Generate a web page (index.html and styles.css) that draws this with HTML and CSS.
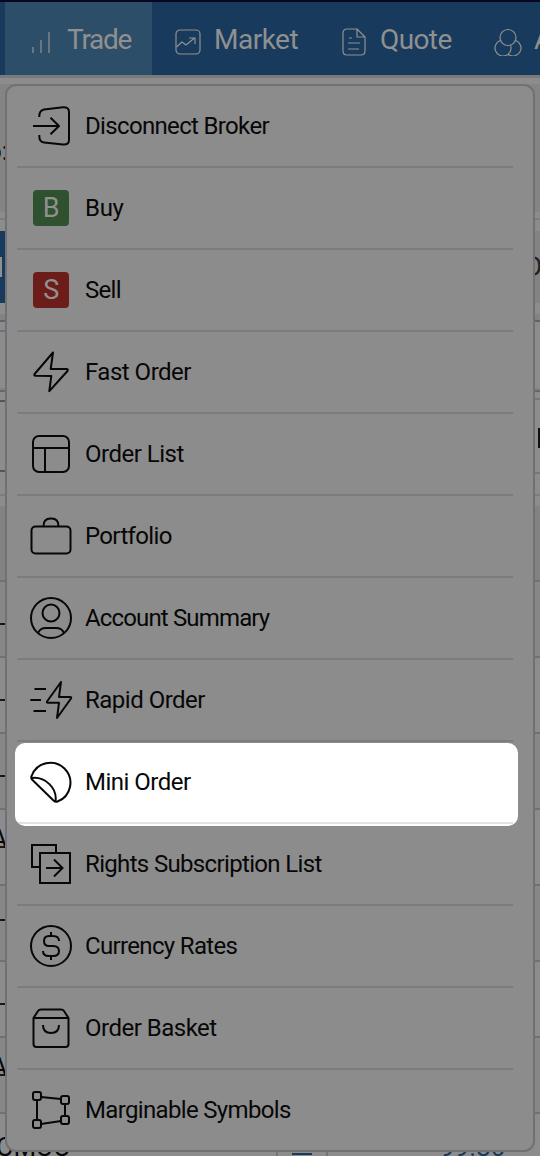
FILE: index.html
```html
<!DOCTYPE html>
<html lang="en">
<head>
<meta charset="utf-8">
<title>Trade menu</title>
<link rel="stylesheet" href="styles.css">
</head>
<body>
<header class="nav">
  <div class="tab active"><svg width="22" height="26" viewBox="0 0 22 26"><path d="M2 24v-6M10 24V11M18 24V3"/></svg><span class="l1">Trade</span></div>
  <div class="tab market"><svg width="26" height="26" viewBox="0 0 26 26"><rect x="1" y="1" width="24" height="24" rx="4"/><path d="M1.500 18l5.500-5 4 3 8.500-7M14 9h6v6"/></svg><span class="l2">Market</span></div>
  <div class="tab quote"><svg width="24" height="28" viewBox="0 0 24 28"><path d="M15 1H5Q1 1 1 5v18q0 4 4 4h14q4 0 4-4V9L15 1v8h8M7 10h3M6 15h12M6 21h11"/></svg><span class="l3">Quote</span></div>
  <div class="tab analysis"><svg width="28" height="28" viewBox="0 0 28 28"><circle cx="14" cy="9.500" r="8"/><path d="M6.200 12.500A8 8 0 1 0 16.600 17.400M21.800 12.500A8 8 0 1 1 14.200 26.400"/></svg><span>Analysis</span></div>
</header>
<main class="page">
  <div class="strip"></div>
  <section class="band"><span class="clip">o:</span></section>
  <section class="actions"><div class="blue"><i></i></div><div class="gray"><span>D</span></div></section>
  <section class="fields"><i></i></section>
  <section class="search"><div class="box"></div><div class="box side"><i></i></div></section>
  <section class="thead"></section>
  <section class="rows">
    <div class="row"><i></i></div><div class="row"><i></i></div><div class="row"><i></i></div>
    <div class="row"><b>A</b></div><div class="row high"><i></i></div><div class="row"><i></i></div><div class="row"><b>A</b></div>
    <div class="last"><span class="sym">OMOO</span><span class="cell"></span><span class="price">99.80</span></div>
  </section>
</main>
<nav class="menu">
  <div class="item"><svg viewBox="0 0 44 44"><path d="M10.300 13Q10 6.500 15 5.500L34 3.300Q40 3 40 8v28q0 5-6 4.500L15 38.500Q10 38 10.300 31M4 22h26M21.500 13.700l8.500 8.300-8.500 8.300"/></svg><span class="wide">Disconnect Broker</span></div>
  <div class="item"><div class="badge buy">B</div><span class="short">Buy</span></div>
  <div class="item"><div class="badge sell">S</div><span class="sellword">Sell</span></div>
  <div class="item"><svg viewBox="0 0 44 44"><path d="M24 2.500L5.600 24q-1 1.700 1 1.800l15.700.200-2 15.200L38.500 21q1-2-1-2H21.700Z"/></svg><span>Fast Order</span></div>
  <div class="item"><svg viewBox="0 0 44 44"><rect x="4" y="4" width="36" height="36" rx="6"/><path d="M4 16h36M16 16v24"/></svg><span>Order List</span></div>
  <div class="item"><svg viewBox="0 0 44 44"><rect x="2.500" y="12.500" width="39" height="27" rx="4"/><path d="M14.500 12q0-7.500 7-7.500h1q7 0 7 7.500"/></svg><span class="wide">Portfolio</span></div>
  <div class="item"><svg viewBox="0 0 44 44"><circle cx="22" cy="22" r="20"/><circle cx="22" cy="17" r="8.500"/><path d="M9 37q2-5 8-5h10q6 0 8 5"/></svg><span class="widest">Account Summary</span></div>
  <div class="item"><svg viewBox="0 0 44 44"><path d="M32 4L18 23.500q-.500 1.300 1 1.300h11L28 40l14-19.500q.800-1.500-1-1.500H30ZM5.500 11H17M1.300 22H12M4.500 33H17"/></svg><span>Rapid Order</span></div>
  <div class="item spot"><svg viewBox="0 0 44 44"><path d="M2.600 16A20 20 0 1 1 28.500 41.500Q26.500 42.300 24.500 40.500L3.500 20Q1.500 18 2.600 16ZM3 18C16 16.500 28.500 28 26.500 41.500"/></svg><span>Mini Order</span></div>
  <div class="item"><svg viewBox="0 0 44 44" class="sharp"><path d="M11 25H3V3h24v8M11 11h30v30H11ZM17 26h16M25 17.500l8.500 8.500-8.500 8.500"/></svg><span class="wide">Rights Subscription List</span></div>
  <div class="item"><svg viewBox="0 0 44 44"><circle cx="22" cy="22" r="20"/><path d="M22 8v4M22 32v4M30 17q0-5-6-5h-4q-5 0-5 5t5 5h4q6 0 6 5t-6 5h-4q-6 0-6-5"/></svg><span class="wide">Currency Rates</span></div>
  <div class="item"><svg viewBox="0 0 44 44"><path d="M4.500 12v26q0 3 3 3h29q3 0 3-3V12L35 5q-1-1.500-3-1.500H12q-2 0-3 1.500ZH39.500M14 19q0 8 8 8t8-8"/></svg><span>Order Basket</span></div>
  <div class="item"><svg viewBox="0 0 44 44"><rect x="4" y="4" width="8" height="8" rx="2"/><rect x="32" y="8" width="8" height="8" rx="2"/><rect x="32" y="28" width="8" height="8" rx="2"/><rect x="4" y="32" width="8" height="8" rx="2"/><path d="M12 9l20 2M8 12v20M36 16v12M12 36l20-3"/></svg><span class="wide">Marginable Symbols</span></div>
</nav>
</body>
</html>
```
FILE: styles.css
```css
* { box-sizing: border-box; }
body { margin: 0; width: 540px; height: 1156px; overflow: hidden; position: relative; background: #8c8c8c; color: #070707; font-family: Roboto, sans-serif; }
svg { fill: none; stroke: currentColor; stroke-width: 2; stroke-linejoin: round; flex: none; }
.nav { height: 75px; border-top: 2px solid #09061f; background: #183a5d; display: flex; padding-left: 5px; color: #909090; font-size: 28px; white-space: nowrap; overflow: hidden; }
.nav svg { stroke-width: 1.2; }
.tab { display: flex; align-items: center; flex: none; padding-top: 6px; }
.tab span { line-height: 32px; margin-top: -4px; }
.active { width: 147px; background: #2d4e69; padding-left: 26px; gap: 14px; }
.market { width: 166px; padding-left: 23px; gap: 13px; }
.quote { width: 152px; padding-left: 24px; gap: 14px; }
.analysis { width: 70px; padding-left: 24px; gap: 12px; }
.l1 { letter-spacing: -1.3px; }
.l2 { letter-spacing: -0.5px; }
.l3 { letter-spacing: -0.6px; }
.strip { height: 9px; border-top: 3px solid #7a7a7c; }
.band { height: 128px; background: #848484; padding-top: 52px; overflow: hidden; }
.clip { display: block; font-size: 26px; line-height: 30px; margin-left: -13px; }
.actions { margin-top: 6px; border-top: 2px solid #7d7d7e; height: 96px; padding-top: 11px; display: flex; justify-content: space-between; }
.blue { width: 20px; height: 72px; background: #183a5d; padding-top: 26px; }
.blue i { display: block; width: 2px; height: 20px; background: #909090; }
.gray { width: 20px; height: 72px; background: #838383; padding: 19px 0 0 4px; font-size: 28px; line-height: 34px; overflow: hidden; color: #222; }
.fields { height: 76px; background: linear-gradient(#828282 6px, #8c8c8c 6px 74px, #828282 74px); padding-top: 6px; }
.fields::before { content: ""; display: block; height: 68px; border-top: 2px solid #626269; border-bottom: 2px solid #66666e; }
.fields i { display: block; width: 10px; height: 2px; margin-top: -62px; background: #717178; }
.search { margin-top: 8px; height: 76px; display: flex; justify-content: space-between; align-items: center; }
.box { width: 20px; height: 72px; border: solid #555; border-width: 2px 0; }
.side { height: 76px; border-color: #777; padding-top: 28px; }
.side i { display: block; width: 2px; height: 20px; margin-left: auto; background: #111; }
.thead { height: 108px; border-bottom: 2px solid #717175; background: linear-gradient(#8c8c8c 20px, #7d7d80 20px 22px, #8c8c8c 22px 32px, #828282 32px); }
.row { height: 76px; border-bottom: 2px solid #717175; padding-top: 41px; }
.row:nth-child(odd) { background: #868888; }
.row i { display: block; width: 8px; height: 2px; background: #171717; }
.row.high { padding-top: 33px; }
.row b { display: block; width: 14px; height: 18px; margin: -21px 0 0 -9px; font: 25px/20px Roboto, sans-serif; border-bottom: 2px solid #171717; }
.last { height: 42px; display: flex; overflow: hidden; font-size: 26px; line-height: 30px; padding-top: 18px; }
.sym { width: 276px; margin-left: -4px; letter-spacing: -0.5px; }
.cell { width: 52px; height: 50px; border-left: 2px solid #747477; border-right: 2px solid #747477; margin: -18px 0 0 4px; background: linear-gradient(#183a5d, #183a5d) 14px 39px / 20px 2px no-repeat; }
.price { padding-left: 112px; color: #183a5d; }
.menu { position: absolute; left: 5px; top: 84px; width: 530px; height: 1068px; border: 2px solid #707076; border-radius: 11px; background: #8c8c8c; padding: 0 20px 0 10px; }
.item { height: 82px; border-bottom: 2px solid #7c7c7c; display: flex; align-items: center; padding-left: 12px; gap: 12px; font-size: 24px; white-space: nowrap; letter-spacing: -0.5px; }
.item:last-child { height: 80px; border: 0; }
.item svg { width: 44px; height: 44px; }
.item .sharp { stroke-linejoin: miter; }
.wide { letter-spacing: -0.66px; }
.widest { letter-spacing: -0.85px; }
.short { letter-spacing: -0.3px; }
.sellword { letter-spacing: -0.7px; }
.badge { width: 36px; height: 36px; margin: 0 4px; border-radius: 4px; color: #909090; font-size: 27px; line-height: 37px; text-align: center; }
.buy { background: #2f512f; }
.sell { background: #6d1d19; }
.spot { border-color: transparent; position: relative; z-index: 0; }
.spot::before { content: ""; position: absolute; z-index: -1; left: -2px; right: -5px; top: .5px; height: 83.5px; border-radius: 10px; background: linear-gradient(#e3e3e3, #e3e3e3) 2px 79.5px / 496px 2px no-repeat #fff; }
```
